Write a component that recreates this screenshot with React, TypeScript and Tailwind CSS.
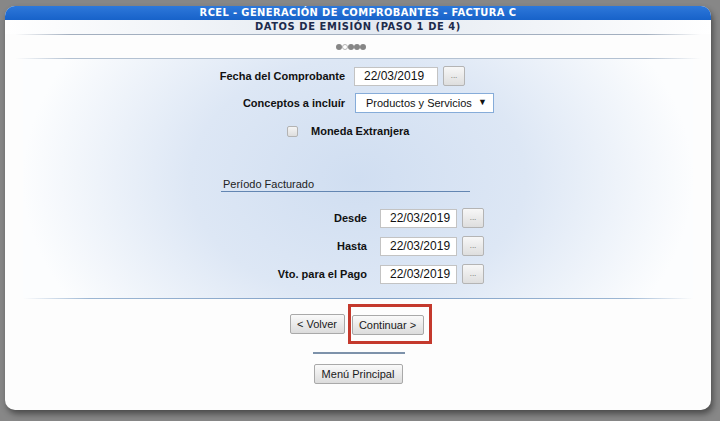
import React from "react";

const sans = { fontFamily: '"Liberation Sans", Arial, sans-serif' };

function DateInput({ w = 84 }: { w?: number }) {
  return (
    <div className="flex items-center gap-[5px]">
      <div
        className="h-[19px] border border-[#c3c3c3] bg-white pl-[9px] text-[12px] leading-[17px] text-[#111]"
        style={{ width: w }}
      >
        22/03/2019
      </div>
      <div className="flex h-[20px] w-[22px] items-end justify-center rounded-[2px] border border-[#b4b4b4] bg-gradient-to-b from-[#f7f7f7] to-[#dedede] pb-[5px] text-[8px] leading-none text-[#666]">
        ...
      </div>
    </div>
  );
}

function Btn({ children, w }: { children: React.ReactNode; w: number }) {
  return (
    <div
      className="flex h-[20px] items-center justify-center rounded-[2px] border border-[#a9a9a9] bg-gradient-to-b from-[#fafafa] to-[#dcdcdc] text-[11px] text-[#1a1a1a]"
      style={{ width: w }}
    >
      {children}
    </div>
  );
}

export default function App() {
  return (
    <div className="h-[421px] w-[720px] overflow-hidden bg-[#878787] pl-[5px] pt-[6px]" style={sans}>
      <div className="flex h-[404px] w-[706px] flex-col overflow-hidden rounded-[10px] bg-[#fdfdfd] shadow-[2px_4px_6px_rgba(0,0,0,0.45)]">
        {/* title bar */}
        <div
          className="flex h-[14px] items-center justify-center bg-gradient-to-b from-[#2d78da] to-[#1762c9] text-[11px] font-bold tracking-[0.4px] text-white"
          style={{ fontFamily: '"DejaVu Sans Condensed", "DejaVu Sans", sans-serif' }}
        >
          RCEL - GENERACIÓN DE COMPROBANTES - FACTURA C
        </div>
        {/* subtitle */}
        <div
          className="flex h-[14px] items-center justify-center bg-[linear-gradient(to_right,#ffffff,#e3e9f1_50%,#ffffff)] text-[11px] font-bold tracking-[0.6px] text-[#1d2b4c]"
          style={{ fontFamily: '"DejaVu Sans Condensed", "DejaVu Sans", sans-serif' }}
        >
          DATOS DE EMISIÓN (PASO 1 DE 4)
        </div>
        <div className="mx-[10px] h-[1px] bg-[linear-gradient(to_right,transparent,#a3afbf_8%,#a3afbf_92%,transparent)]" />
        {/* dots */}
        <div className="flex h-[23px] items-center justify-center pr-[14px]">
          <span className="h-[6px] w-[6px] rounded-full bg-[#868686]" />
          <span className="h-[6px] w-[6px] rounded-full border border-[#b5b5b5] bg-white" />
          <span className="h-[6px] w-[6px] rounded-full bg-[#868686]" />
          <span className="h-[6px] w-[6px] rounded-full bg-[#868686]" />
          <span className="h-[6px] w-[6px] rounded-full bg-[#868686]" />
        </div>
        <div className="mx-[10px] h-[1px] bg-[linear-gradient(to_right,transparent,#b3c1d2_8%,#b3c1d2_92%,transparent)]" />
        {/* content */}
        <div className="mx-[18px] h-[239px] bg-[radial-gradient(ellipse_50%_100%_at_50%_50%,#d0def1_0%,#dde7f5_50%,#fcfdfe_100%)] pt-[7px]">
          <div className="ml-[177px] flex flex-col">
            <div className="flex h-[20px] items-center">
              <div className="w-[145px] text-right text-[11px] font-bold text-[#111]">Fecha del Comprobante</div>
              <div className="ml-[9px]">
                <DateInput />
              </div>
            </div>
            <div className="mt-[7px] flex h-[20px] items-center">
              <div className="w-[145px] text-right text-[11px] font-bold text-[#111]">Conceptos a incluír</div>
              <div className="ml-[10px] flex h-[20px] w-[139px] items-center justify-between whitespace-nowrap border border-[#86acd9] bg-white pl-[10px] pr-[6px] text-[11px] text-[#111]">
                <span>Productos y Servicios</span>
                <span className="text-[9px]">▼</span>
              </div>
            </div>
            <div className="mt-[8px] flex h-[20px] items-center pl-[87px]">
              <span className="h-[11px] w-[11px] rounded-[2px] border border-[#b3b3b3] bg-gradient-to-b from-[#f4f4f4] to-[#dedede]" />
              <span className="ml-[13px] text-[11px] font-bold text-[#111]">Moneda Extranjera</span>
            </div>
            <div className="ml-[21px] mt-[36px] h-[15px] w-[249px] border-b border-[#6386b2] pl-[2px] text-[11px] leading-[14px] text-[#222]">
              Período Facturado
            </div>
            {[
              { l: "Desde", mt: "mt-[16px]" },
              { l: "Hasta", mt: "mt-[8px]" },
              { l: "Vto. para el Pago", mt: "mt-[8px]" },
            ].map((r) => (
              <div key={r.l} className={`flex h-[20px] items-center ${r.mt}`}>
                <div className="w-[167px] text-right text-[11px] font-bold text-[#111]">{r.l}</div>
                <div className="ml-[13px]">
                  <DateInput w={77} />
                </div>
              </div>
            ))}
          </div>
        </div>
        <div className="mx-[18px] h-[1px] bg-[linear-gradient(to_right,transparent,#9cb6d3_10%,#7f9fc6_50%,#9cb6d3_90%,transparent)]" />
        {/* buttons */}
        <div className="mt-[5px] flex items-center justify-center pl-[5px]">
          <Btn w={55}>&lt; Volver</Btn>
          <div className="ml-[3px] border-[3px] border-[#c4392d] pb-[6px] pl-[1px] pr-[5px] pt-[8px]">
            <Btn w={72}>Continuar &gt;</Btn>
          </div>
        </div>
        <div className="mx-auto mt-[8px] h-[2px] w-[92px] translate-x-[1px] bg-[#7d92aa]" />
        <div className="mt-[10px] flex justify-center">
          <Btn w={89}>Menú Principal</Btn>
        </div>
      </div>
    </div>
  );
}
